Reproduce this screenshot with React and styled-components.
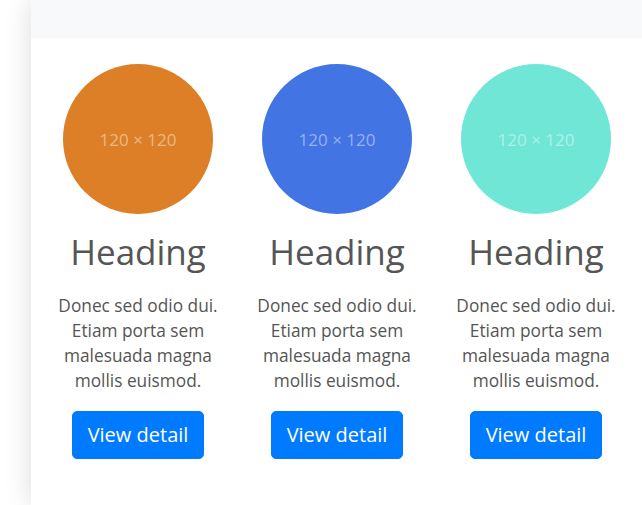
import React from "react";
import styled, { createGlobalStyle } from "styled-components";

const GlobalStyle = createGlobalStyle`
  html, body {
    margin: 0;
    padding: 0;
    background: #fff;
    overflow: hidden;
  }
  body {
    font-family: "Open Sans", "Noto Sans", sans-serif;
  }
`;

const features = [
  { color: "#dc7f26", id: 1 },
  { color: "#4274e3", id: 2 },
  { color: "#6fe6d6", id: 3 },
];

const App = () => {
  return (
    <Page>
      <GlobalStyle />
      <Card>
        <TopBand />
        <Row>
          {features.map((f) => {
            return (
              <Column key={f.id}>
                <Circle bg={f.color}>120 × 120</Circle>
                <Heading>Heading</Heading>
                <Text>
                  Donec sed odio dui. Etiam porta sem malesuada magna mollis
                  euismod.
                </Text>
                <Button>View detail</Button>
              </Column>
            );
          })}
        </Row>
      </Card>
    </Page>
  );
};

export default App;

const Page = styled.div`
  width: 642px;
  height: 505px;
  padding-left: 31px;
  box-sizing: border-box;
  overflow: hidden;
`;

const Card = styled.div`
  width: 700px;
  height: 505px;
  background: #fff;
  box-shadow: 0 0 26px rgba(0, 0, 0, 0.14);
`;

const TopBand = styled.div`
  height: 38px;
  background: #f8f9fa;
`;

const Row = styled.div`
  display: flex;
  padding: 26px 0 0 7.5px;
`;

const Column = styled.div`
  width: 199px;
  padding: 0 12px;
  box-sizing: border-box;
  display: flex;
  flex-direction: column;
  align-items: center;
  text-align: center;
`;

const Circle = styled.div`
  width: 150px;
  height: 150px;
  border-radius: 50%;
  background: ${({ bg }) => bg};
  color: rgba(255, 255, 255, 0.45);
  font-size: 17px;
  display: flex;
  align-items: center;
  justify-content: center;
`;

const Heading = styled.h2`
  margin: 17px 0 0;
  font-size: 35px;
  font-weight: 400;
  line-height: 1.2;
  color: #555;
`;

const Text = styled.p`
  margin: 20px 0 0;
  font-size: 17.3px;
  line-height: 25px;
  color: #555;
`;

const Button = styled.button`
  margin-top: 18px;
  font-family: inherit;
  font-size: 20px;
  line-height: 30px;
  padding: 8px 15px;
  border: 1px solid #007bff;
  border-radius: 5px;
  background: #007bff;
  color: #fff;
  cursor: pointer;
`;
